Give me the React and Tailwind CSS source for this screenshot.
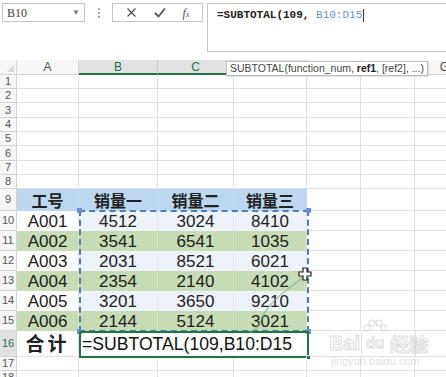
import React from 'react';

const cols = [
  { key: 'A', w: 62 },
  { key: 'B', w: 79 },
  { key: 'C', w: 76 },
  { key: 'D', w: 73 },
  { key: 'E', w: 54 },
  { key: 'F', w: 54 },
  { key: 'G', w: 60 },
];

const emptyHeights = [14, 14, 15, 14, 14, 15, 14, 14];

const data = [
  ['A001', '4512', '3024', '8410'],
  ['A002', '3541', '6541', '1035'],
  ['A003', '2031', '8521', '6021'],
  ['A004', '2354', '2140', '4102'],
  ['A005', '3201', '3650', '9210'],
  ['A006', '2144', '5124', '3021'],
];

const RowHead = ({ n, active }) => (
  <div
    className={`w-[17px] shrink-0 border-r border-b border-[#d4d4d4] text-[11px] leading-none flex items-center justify-center ${
      active ? 'bg-[#e1e1e1] text-[#217346]' : 'bg-[#f7f7f7] text-[#555]'
    }`}
  >
    {n}
  </div>
);

const EmptyCells = ({ from = 0 }) =>
  cols.slice(from).map((c) => (
    <div key={c.key} style={{ width: c.w }} className="shrink-0 border-r border-b border-[#e2dfe6]" />
  ));

const App = () => {
  return (
    <div className="relative w-[446px] h-[377px] overflow-hidden bg-white font-['Liberation_Sans',sans-serif]">
      {/* Formula bar */}
      <div className="h-[60px] flex items-start pt-[3px] pl-[2px] bg-white">
        <div className="w-[83px] h-[19px] border border-[#c6c6c6] flex items-center justify-between pl-[4px] pr-[4px] text-[12px] text-[#444] font-['Liberation_Serif',serif]">
          <span>B10</span>
          <span className="text-[8px] text-[#777]">▼</span>
        </div>
        <div className="w-[27px] h-[19px] flex flex-col items-center justify-center gap-[2px]">
          <span className="w-[2px] h-[2px] bg-[#aaa]" />
          <span className="w-[2px] h-[2px] bg-[#aaa]" />
          <span className="w-[2px] h-[2px] bg-[#aaa]" />
        </div>
        <div className="w-[91px] h-[19px] border border-[#c6c6c6] flex items-center justify-around px-[4px] text-[#555]">
          <svg width="11" height="11" viewBox="0 0 11 11">
            <path d="M1.5 1.5 L9.5 9.5 M9.5 1.5 L1.5 9.5" stroke="#555" strokeWidth="1.4" fill="none" />
          </svg>
          <svg width="12" height="11" viewBox="0 0 12 11">
            <path d="M1 6 L4.5 9.5 L11 1.5" stroke="#555" strokeWidth="1.8" fill="none" />
          </svg>
          <span className="text-[12px] italic font-['Liberation_Serif',serif] leading-none">
            f<span className="text-[8px]">x</span>
          </span>
        </div>
        <div className="ml-[4px] flex-1 h-[49px] border border-r-0 border-[#c6c6c6] pl-[9px] pt-[4px] font-['Liberation_Mono',monospace] text-[11px] font-semibold text-[#222] leading-[14px]">
          =SUBTOTAL(109, <span className="text-[#6d8fcf] font-normal">B10:D15</span>
          <span className="inline-block w-[1px] h-[13px] bg-[#333] align-middle ml-[1px]" />
        </div>
      </div>

      {/* Column headers */}
      <div className="flex h-[15px]">
        <div className="w-[17px] shrink-0 bg-[#f7f7f7] border-r border-b border-[#d4d4d4] relative">
          <span className="absolute right-[2px] bottom-[2px] w-0 h-0 border-l-[7px] border-l-transparent border-b-[7px] border-b-[#d8d8d8]" />
        </div>
        {cols.map((c) => {
          const active = ['B', 'C', 'D'].includes(c.key);
          return (
            <div
              key={c.key}
              style={{ width: c.w }}
              className={`shrink-0 border-r flex items-center justify-center text-[12px] leading-none ${
                active
                  ? 'bg-[#e1e1e1] text-[#217346] border-r-[#c9c9c9] border-b-2 border-b-[#217346]'
                  : 'bg-[#f7f7f7] text-[#555] border-r-[#d4d4d4] border-b border-b-[#d4d4d4]'
              }`}
            >
              {c.key}
            </div>
          );
        })}
      </div>

      {/* Empty rows 1-8 */}
      {emptyHeights.map((h, i) => (
        <div key={i} className="flex" style={{ height: h }}>
          <RowHead n={i + 1} />
          <EmptyCells />
        </div>
      ))}

      {/* Header row 9 */}
      <div className="flex h-[22px]">
        <RowHead n={9} />
        {['工号', '销量一', '销量二', '销量三'].map((t, i) => (
          <div
            key={t}
            style={{ width: cols[i].w }}
            className="shrink-0 bg-[#bdd7ee] border-r border-[#c9d9ea] flex items-center justify-center text-[16px] font-bold text-[#222] font-['Noto_Sans_CJK_SC',sans-serif]"
          >
            {t}
          </div>
        ))}
        <EmptyCells from={4} />
      </div>

      {/* Data rows 10-15 */}
      {data.map((row, r) => {
        const green = r % 2 === 1;
        return (
          <div key={r} className="flex h-[20px]">
            <RowHead n={10 + r} />
            {row.map((v, i) => (
              <div
                key={i}
                style={{ width: cols[i].w }}
                className={`shrink-0 border-r flex items-center justify-center text-[17px] text-[#222] leading-none ${
                  green
                    ? 'bg-[#c6dbb6] border-[#d2e3c6]'
                    : i === 0
                    ? 'bg-white border-[#e6e6e6]'
                    : 'bg-[#eef2f9] border-[#e2e6ee]'
                }`}
              >
                {v}
              </div>
            ))}
            <div className="flex border-t border-[#e2dfe6] -mt-px">
              <EmptyCells from={4} />
            </div>
          </div>
        );
      })}

      {/* Row 16 */}
      <div className="flex h-[26px]">
        <RowHead n={16} active />
        <div
          style={{ width: cols[0].w }}
          className="shrink-0 border-r border-b border-[#e2dfe6] flex items-center justify-center text-[19px] font-bold text-[#222] font-['Noto_Sans_CJK_SC',sans-serif] tracking-[3px]"
        >
          合计
        </div>
        <div className="w-[229px] shrink-0 flex items-center pl-[3px] text-[17.6px] text-[#111] whitespace-nowrap bg-white">
          =SUBTOTAL(109,B10:D15
        </div>
        <EmptyCells from={4} />
      </div>

      {/* Rows 17-18 */}
      {[14, 14].map((h, i) => (
        <div key={i} className="flex" style={{ height: h }}>
          <RowHead n={17 + i} />
          <EmptyCells />
        </div>
      ))}

      {/* Function tooltip */}
      <div className="absolute left-[226px] top-[61px] h-[15px] px-[3px] bg-white border border-[#bdbdbd] text-[10.5px] leading-[13px] text-[#444] whitespace-nowrap shadow-[1px_1px_1px_rgba(0,0,0,0.1)]">
        SUBTOTAL(function_num, <b className="text-[#222]">ref1</b>, [ref2], ...)
      </div>

      {/* Reference range marching border */}
      <div className="absolute left-[79px] top-[210px] w-[230px] h-[122px] border-2 border-dashed border-[#4f7fae] pointer-events-none" />
      <span className="absolute left-[77px] top-[208px] w-[5px] h-[5px] bg-[#6f8fcf]" />
      <span className="absolute left-[306px] top-[208px] w-[5px] h-[5px] bg-[#6f8fcf]" />
      <span className="absolute left-[77px] top-[329px] w-[5px] h-[5px] bg-[#6f8fcf]" />
      <span className="absolute left-[306px] top-[329px] w-[5px] h-[5px] bg-[#6f8fcf]" />

      {/* Active cell border */}
      <div className="absolute left-[79px] top-[331px] w-[230px] h-[27px] border-2 border-[#217346] pointer-events-none" />
      <span className="absolute left-[306px] top-[355px] w-[5px] h-[5px] bg-[#217346] border border-white" />

      {/* Faint drag trace */}
      <svg className="absolute left-0 top-0 pointer-events-none" width="446" height="377">
        <path d="M302 278 C 285 292, 270 300, 262 318 S 252 330, 250 333" stroke="#7fae7a" strokeOpacity="0.6" strokeWidth="1.5" fill="none" />
      </svg>

      {/* Plus cursor */}
      <svg className="absolute left-[298px] top-[267px]" width="14" height="14" viewBox="0 0 14 14">
        <path d="M5 1 H9 V5 H13 V9 H9 V13 H5 V9 H1 V5 H5 Z" fill="white" stroke="#222" strokeWidth="1.2" />
      </svg>

      {/* Watermark */}
      <div className="absolute left-[329px] top-[331px] flex flex-col items-start pointer-events-none opacity-70">
        <div className="flex items-end gap-[2px]">
          <span className="text-[20px] font-bold text-transparent leading-none [-webkit-text-stroke:1px_#cfcfcf]">Bai</span>
          <span className="relative flex items-center justify-center w-[26px] h-[22px]">
            <svg className="absolute -top-[12px] left-[1px]" width="24" height="14" viewBox="0 0 24 14">
              <circle cx="4" cy="9" r="3" fill="none" stroke="#d0d0d0" strokeWidth="1.2" />
              <circle cx="9" cy="4" r="3" fill="none" stroke="#d0d0d0" strokeWidth="1.2" />
              <circle cx="16" cy="4" r="3" fill="none" stroke="#d0d0d0" strokeWidth="1.2" />
              <circle cx="21" cy="9" r="3" fill="none" stroke="#d0d0d0" strokeWidth="1.2" />
            </svg>
            <span className="text-[15px] font-bold text-transparent leading-none [-webkit-text-stroke:1px_#cfcfcf]">du</span>
          </span>
          <span className="text-[19px] font-bold text-transparent leading-none font-['Noto_Sans_CJK_SC',sans-serif] [-webkit-text-stroke:1px_#cfcfcf]">经验</span>
        </div>
        <span className="text-[11px] text-[#d6d6d6] leading-none mt-[3px] ml-[2px]">jingyan.baidu.com</span>
      </div>
    </div>
  );
};

export default App;
